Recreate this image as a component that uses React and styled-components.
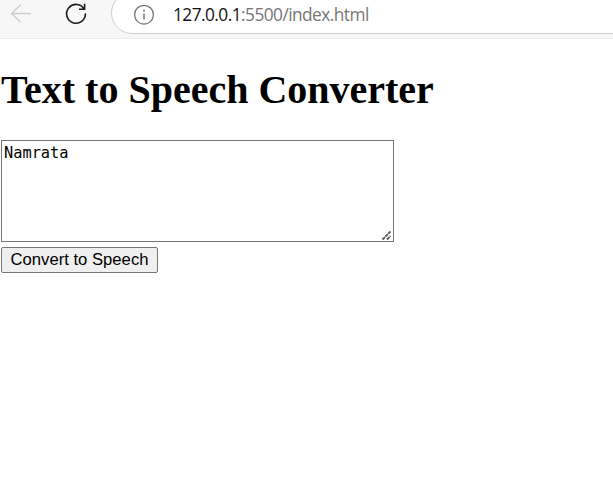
import React from "react";
import styled, { createGlobalStyle } from "styled-components";

const GlobalStyle = createGlobalStyle`
  * { box-sizing: border-box; }
  body { margin: 0; background: #fff; overflow: hidden; }
`;

const Window = styled.div`
  display: flex;
  flex-direction: column;
  width: 613px;
  height: 491px;
  overflow: hidden;
  background: #fff;
`;

const Toolbar = styled.header`
  display: flex;
  align-items: flex-start;
  flex: none;
  height: 39px;
  overflow: hidden;
  background: #f7f7f7;
  border-bottom: 1px solid #ebebeb;
`;

const NavButton = styled.span`
  display: flex;
  flex: none;
  width: ${(p) => p.$width}px;
  height: 28px;
  color: ${(p) => p.$color};
`;

const AddressBar = styled.div`
  display: flex;
  flex: none;
  width: 560px;
  height: 42px;
  margin-top: -8px;
  padding: 8px 0 0 20px;
  background: #fff;
  border: 1px solid #cfcfcf;
  border-radius: 21px;
`;

const Url = styled.span`
  margin-left: 18px;
  color: #767676;
  font: 17.3px/28px "Open Sans", "Noto Sans", sans-serif;
  letter-spacing: -0.54px;
  white-space: nowrap;
`;

const Host = styled.span`
  color: #111;
`;

const Page = styled.main`
  display: flex;
  flex-direction: column;
  align-items: flex-start;
  padding: 28px 0 0 1px;
`;

const Title = styled.h1`
  margin: 0 0 27px;
  color: #000;
  font: bold 40px/46px "Liberation Serif", "Times New Roman", serif;
  white-space: nowrap;
`;

const TextArea = styled.textarea`
  display: block;
  width: 393px;
  height: 102px;
  margin: 0 0 5px;
  padding: 2px;
  color: #000;
  background: #fff;
  border: 1px solid #767676;
  border-radius: 0;
  outline: none;
  resize: none;
  font: 15.3px/20px "DejaVu Sans Mono", monospace;
`;

const Field = styled.div`
  position: relative;
`;

const Grip = styled.svg`
  position: absolute;
  left: 380px;
  top: 90px;
`;

const ConvertButton = styled.button`
  width: 157px;
  height: 26px;
  padding: 0;
  color: #000;
  background: #efefef;
  border: 1px solid #767676;
  border-radius: 2px;
  font: 16.67px/22px "Liberation Sans", Arial, sans-serif;
  white-space: nowrap;
`;

export default function App() {
  return (
    <Window>
      <GlobalStyle />
      <Toolbar>
        <NavButton $width={56} $color="#cdcdcd">
          <svg width="40" height="28" fill="none" stroke="currentColor" strokeWidth="1.3">
            <path d="M31 13.5H11.5M20.7 4.7L11.5 13.5L20.7 22.2" />
          </svg>
        </NavButton>
        <NavButton $width={55} $color="#1b1b1b">
          <svg width="40" height="28" fill="none" stroke="currentColor" strokeWidth="1.6">
            <path d="M28.3 9.4A9.4 9.4 0 1 0 29.4 13.4M28.6 3.8V9.3H23" />
          </svg>
        </NavButton>
        <AddressBar>
          <svg width="23" height="28" fill="none" stroke="#767676" strokeWidth="1.3">
            <circle cx="12" cy="13.7" r="9.4" />
            <path d="M12 12.5V18.5" strokeWidth="1.5" />
            <circle cx="12" cy="9.7" r="1" fill="#767676" stroke="none" />
          </svg>
          <Url>
            <Host>127.0.0.1</Host>:5500/index.html
          </Url>
        </AddressBar>
      </Toolbar>
      <Page>
        <Title>Text to Speech Converter</Title>
        <Field>
          <TextArea defaultValue="Namrata" spellCheck={false} />
          <Grip width="11" height="11" fill="none" stroke="#555" strokeWidth="1.8" strokeDasharray="3.5 0.6">
            <path d="M1.5 9.5L9.5 1.5M6 9.5L9.5 6" />
          </Grip>
        </Field>
        <ConvertButton>Convert to Speech</ConvertButton>
      </Page>
    </Window>
  );
}
